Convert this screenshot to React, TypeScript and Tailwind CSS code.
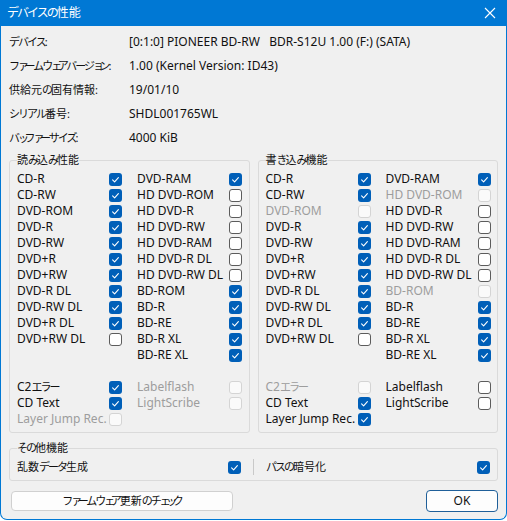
type State = 'on' | 'off' | 'dis';
type Cell = [string, State] | null;

const SMALL_KANA = 'ァィゥェォッャュョぁぃぅぇぉっゃゅょ';

// Kana runs are set tighter so Japanese labels keep a UI-font width
function Jp({ text }: { text: string }) {
  const runs: { s: string; k: 'small' | 'kana' | 'other' }[] = [];
  for (const ch of text) {
    const k = SMALL_KANA.includes(ch) ? 'small' : /[\u3040-\u30ff]/.test(ch) ? 'kana' : 'other';
    const last = runs[runs.length - 1];
    if (last && last.k === k) last.s += ch;
    else runs.push({ s: ch, k });
  }
  return (
    <>
      {runs.map((r, i) => (
        <span
          key={i}
          className={r.k === 'small' ? 'tracking-[-4.5px]' : r.k === 'kana' ? 'tracking-[-2px]' : ''}
        >
          {r.s}
        </span>
      ))}
    </>
  );
}

const info: [string, string][] = [
  ['デバイス:', '[0:1:0] PIONEER BD-RW   BDR-S12U 1.00 (F:) (SATA)'],
  ['ファームウェアバージョン:', '1.00 (Kernel Version: ID43)'],
  ['供給元の固有情報:', '19/01/10'],
  ['シリアル番号:', 'SHDL001765WL'],
  ['バッファーサイズ:', '4000 KiB'],
];

const readRows: [Cell, Cell][] = [
  [['CD-R', 'on'], ['DVD-RAM', 'on']],
  [['CD-RW', 'on'], ['HD DVD-ROM', 'off']],
  [['DVD-ROM', 'on'], ['HD DVD-R', 'off']],
  [['DVD-R', 'on'], ['HD DVD-RW', 'off']],
  [['DVD-RW', 'on'], ['HD DVD-RAM', 'off']],
  [['DVD+R', 'on'], ['HD DVD-R DL', 'off']],
  [['DVD+RW', 'on'], ['HD DVD-RW DL', 'off']],
  [['DVD-R DL', 'on'], ['BD-ROM', 'on']],
  [['DVD-RW DL', 'on'], ['BD-R', 'on']],
  [['DVD+R DL', 'on'], ['BD-RE', 'on']],
  [['DVD+RW DL', 'off'], ['BD-R XL', 'on']],
  [null, ['BD-RE XL', 'on']],
  [null, null],
  [['C2エラー', 'on'], ['Labelflash', 'dis']],
  [['CD Text', 'on'], ['LightScribe', 'dis']],
  [['Layer Jump Rec.', 'dis'], null],
];

const writeRows: [Cell, Cell][] = [
  [['CD-R', 'on'], ['DVD-RAM', 'on']],
  [['CD-RW', 'on'], ['HD DVD-ROM', 'dis']],
  [['DVD-ROM', 'dis'], ['HD DVD-R', 'off']],
  [['DVD-R', 'on'], ['HD DVD-RW', 'off']],
  [['DVD-RW', 'on'], ['HD DVD-RAM', 'off']],
  [['DVD+R', 'on'], ['HD DVD-R DL', 'off']],
  [['DVD+RW', 'on'], ['HD DVD-RW DL', 'off']],
  [['DVD-R DL', 'on'], ['BD-ROM', 'dis']],
  [['DVD-RW DL', 'on'], ['BD-R', 'on']],
  [['DVD+R DL', 'on'], ['BD-RE', 'on']],
  [['DVD+RW DL', 'off'], ['BD-R XL', 'on']],
  [null, ['BD-RE XL', 'on']],
  [null, null],
  [['C2エラー', 'dis'], ['Labelflash', 'off']],
  [['CD Text', 'on'], ['LightScribe', 'off']],
  [['Layer Jump Rec.', 'on'], null],
];

function Box({ state }: { state: State }) {
  if (state === 'on') {
    return (
      <span className="flex h-[13px] w-[13px] shrink-0 items-center justify-center rounded-[3px] bg-[#005fb8]">
        <svg viewBox="0 0 13 13" className="h-[13px] w-[13px]">
          <path d="M3.6 6.9 5.6 8.8 9.4 4.6" fill="none" stroke="#fff" strokeWidth="1.1" strokeLinecap="round" strokeLinejoin="round" />
        </svg>
      </span>
    );
  }
  if (state === 'dis') {
    return <span className="h-[13px] w-[13px] shrink-0 rounded-[3px] border border-[#d4d4d4] bg-[#fafafa]" />;
  }
  return <span className="h-[13px] w-[13px] shrink-0 rounded-[3px] border border-[#5c5c5c] bg-white" />;
}

function Option({ cell }: { cell: Cell }) {
  if (!cell) return <div className="w-[105px]" />;
  const [label, state] = cell;
  return (
    <div className="flex w-[105px] items-center">
      <span className={`w-[92px] whitespace-nowrap ${state === 'dis' ? 'text-[#9d9d9d]' : 'text-[#111]'}`}>
        {label.startsWith('C2') ? (
          <>
            C2
            <span className="text-[11px]">
              <Jp text="エラー" />
            </span>
          </>
        ) : (
          label
        )}
      </span>
      <Box state={state} />
    </div>
  );
}

function Group({ title, rows }: { title: string; rows: [Cell, Cell][] }) {
  return (
    <fieldset className="flex-1 rounded-[3px] border border-[#dadada] pb-[5px] pl-[7px] pt-[3px]">
      <legend className="h-[16px] text-[11px] leading-[16px] text-[#111]">
        <Jp text={title} />
      </legend>
      {rows.map((row, i) => (
        <div key={i} className="flex h-[16px] items-center gap-[15px]">
          <Option cell={row[0]} />
          <Option cell={row[1]} />
        </div>
      ))}
    </fieldset>
  );
}

export default function App() {
  return (
    <div className="h-[521px] w-[507px] bg-white font-['Noto_Sans','Noto_Sans_CJK_JP',sans-serif] text-[12px]">
      <div className="flex h-[520px] flex-col overflow-hidden rounded-b-[7px] border border-t-0 border-[#0078d4] bg-[#f0f0f0]">
        <div className="flex h-[26px] shrink-0 items-center justify-between bg-[#0078d4] pl-[6px] pr-[10px] text-white">
          <span className="text-[12px]">
            <Jp text="デバイスの性能" />
          </span>
          <svg viewBox="0 0 12 12" className="h-[12px] w-[12px]">
            <path d="M1 1 11 11M11 1 1 11" stroke="#fff" strokeWidth="1.1" />
          </svg>
        </div>

        <div className="flex flex-1 flex-col px-[8px] pt-[4px]">
          {info.map(([k, v]) => (
            <div key={k} className="grid h-[24px] grid-cols-[120px_1fr] items-center text-[#111]">
              <span className="whitespace-nowrap text-[11px]">
                <Jp text={k} />
              </span>
              <span className="whitespace-pre">{v}</span>
            </div>
          ))}

          <div className="mt-[2px] flex gap-[8px]">
            <Group title="読み込み性能" rows={readRows} />
            <Group title="書き込み機能" rows={writeRows} />
          </div>

          <fieldset className="mt-[7px] rounded-[3px] border border-[#dadada] pb-[5px] pl-[7px] pr-[7px] pt-[3px]">
            <legend className="h-[16px] text-[11px] leading-[16px] text-[#111]">
              <Jp text="その他機能" />
            </legend>
            <div className="flex h-[16px] items-center text-[11px] text-[#111]">
              <div className="flex flex-1 items-center justify-between">
                <span>
                  <Jp text="乱数データ生成" />
                </span>
                <Box state="on" />
              </div>
              <div className="mx-[12px] h-[16px] w-px bg-[#c9c9c9]" />
              <div className="flex flex-1 items-center justify-between">
                <span>
                  <Jp text="パスの暗号化" />
                </span>
                <Box state="on" />
              </div>
            </div>
          </fieldset>

          <div className="mt-[9px] flex items-center justify-between">
            <button className="ml-[2px] h-[20px] w-[222px] rounded-[4px] border border-[#d0d0d0] bg-[#fdfdfd] text-[11px] text-[#111]">
              <Jp text="ファームウェア更新のチェック" />
            </button>
            <button className="h-[22px] w-[72px] rounded-[4px] border border-[#1f5f99] bg-[#fdfdfd] text-[12px] text-[#111]">
              OK
            </button>
          </div>
        </div>
      </div>
    </div>
  );
}
